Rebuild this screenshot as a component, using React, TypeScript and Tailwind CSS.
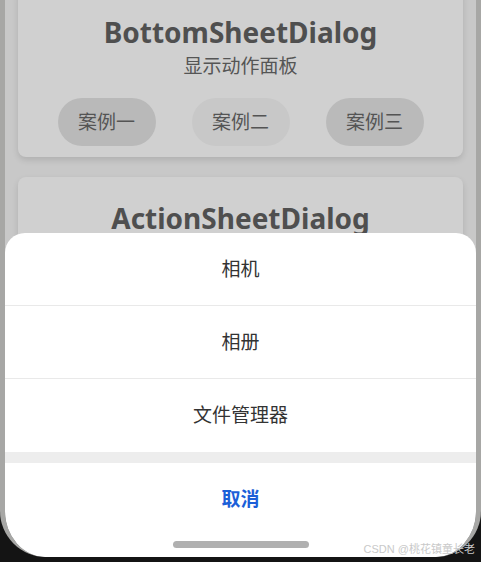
const sans = "font-['Noto_Sans','Noto_Sans_CJK_SC',sans-serif]";

const cases = [
  { label: "案例一", tone: "bg-[#b9b9b9]" },
  { label: "案例二", tone: "bg-[#c8c8c8]" },
  { label: "案例三", tone: "bg-[#bababa]" },
];

const actions = ["相机", "相册", "文件管理器"];

export default function App() {
  return (
    <div className={`w-[481px] h-[562px] bg-[#141414] overflow-hidden relative ${sans}`}>
      {/* phone bezel */}
      <div className="h-[557px] border-x-[5px] border-[#a7a7a5] rounded-b-[46px] overflow-hidden">
        <div className="relative h-full bg-[#c8c8c8] rounded-b-[40px] overflow-hidden px-[13px] flex flex-col gap-[20px]">
          {/* card: BottomSheetDialog */}
          <div className="-mt-[12px] bg-[#d0d0d0] rounded-[8px] shadow-[0_3px_6px_rgba(0,0,0,0.12)] pt-[26px] pb-[11px] flex flex-col items-center">
            <h1 className="text-[28px] leading-[36px] font-bold text-[#4f4f4f]">BottomSheetDialog</h1>
            <p className="mt-[3px] text-[19px] leading-[26px] text-[#555]">显示动作面板</p>
            <div className="mt-[19px] flex justify-center gap-[36px]">
              {cases.map((c) => (
                <button
                  key={c.label}
                  className={`w-[98px] h-[48px] rounded-full text-[19px] text-[#545454] ${c.tone}`}
                >
                  {c.label}
                </button>
              ))}
            </div>
          </div>

          {/* card: ActionSheetDialog */}
          <div className="bg-[#d0d0d0] rounded-[8px] shadow-[0_3px_6px_rgba(0,0,0,0.12)] pt-[23px] h-[200px] flex flex-col items-center">
            <h1 className="text-[28px] leading-[36px] font-bold text-[#4f4f4f]">ActionSheetDialog</h1>
          </div>

          {/* action sheet */}
          <div className="absolute left-0 right-0 top-[233px] bottom-0 bg-white rounded-t-[20px] flex flex-col">
            {actions.map((a, i) => (
              <div
                key={a}
                className={`h-[73px] flex items-center justify-center text-[19px] text-[#333] ${
                  i < actions.length - 1 ? "border-b border-[#e9e9e9]" : ""
                }`}
              >
                {a}
              </div>
            ))}
            <div className="h-[11px] bg-[#ededed]" />
            <div className="h-[72px] flex items-center justify-center text-[19px] font-bold text-[#1b5fd8]">
              取消
            </div>
            <div className="mt-[6px] mx-auto w-[136px] h-[7px] rounded-full bg-[#b0b0b0]" />
          </div>
        </div>
      </div>

      {/* watermark */}
      <span className="absolute right-[6px] bottom-[7px] text-[11px] leading-[12px] text-[#c9c9c9] font-['Liberation_Sans','Noto_Sans_CJK_SC',sans-serif]">
        CSDN @桃花镇童长老
      </span>
    </div>
  );
}
